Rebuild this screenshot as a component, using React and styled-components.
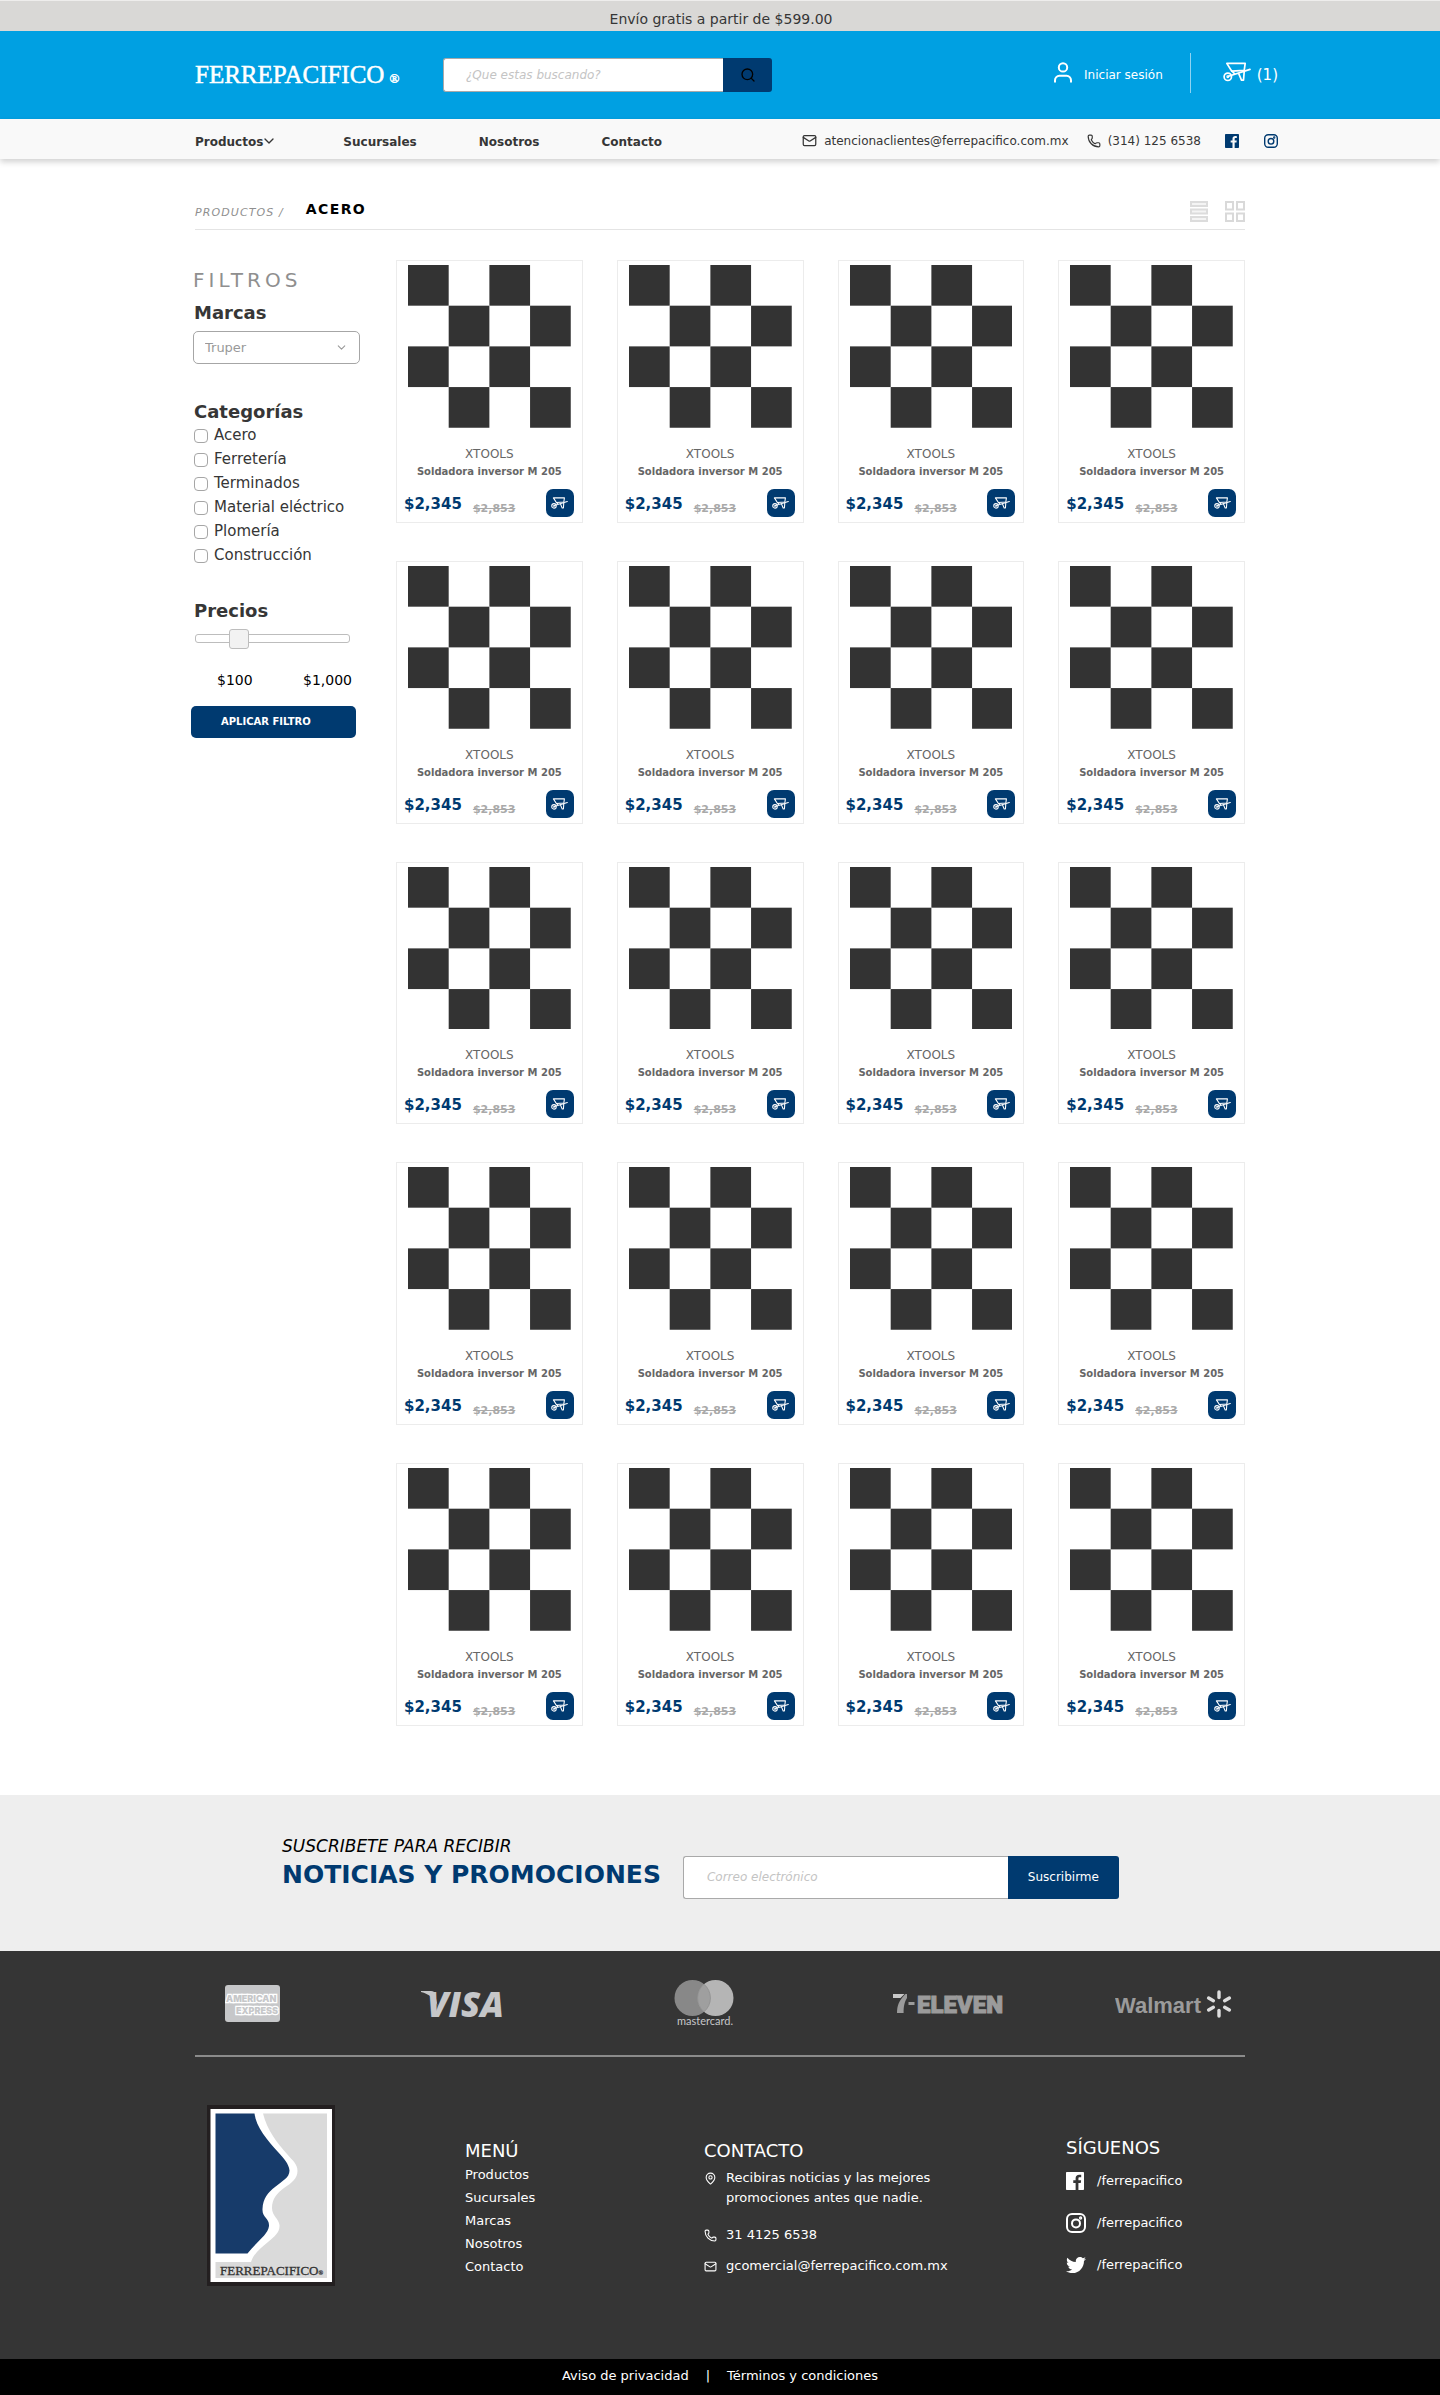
import React, { useState } from 'react';
import styled, { createGlobalStyle, ThemeProvider } from 'styled-components';
import { ChevronDown, Mail, MapPin, Phone, Search } from 'lucide-react';
import { FaTwitter } from 'react-icons/fa';

const theme = {
  navy: '#003a70',
  sky: '#00a0e2',
  ink: '#363636',
  dark: '#353535',
  mute: '#8f8f8f',
};

const GlobalStyle = createGlobalStyle`
  *, *::before, *::after { box-sizing: border-box; }
  body {
    margin: 0;
    background: #fff;
    color: ${theme.ink};
    font-family: "DejaVu Sans", Verdana, sans-serif;
    font-size: 12px;
  }
  h1, h2, h3, p, ul { margin: 0; padding: 0; font-weight: normal; }
  ul { list-style: none; }
  a { color: inherit; text-decoration: none; }
  button, input, select { font-family: inherit; margin: 0; }
  button { cursor: pointer; border: 0; padding: 0; }
  svg { display: block; flex: none; }
`;

const Container = styled.div`
  width: 100%;
  max-width: 1050px;
  margin: 0 auto;
`;

/* ---------- header ---------- */

const Promo = styled.p`
  padding: 7px 0 0 2px;
  border-top: 1px solid #eeedec;
  background: #d9d8d6;
  font-size: 14px;
  line-height: 23px;
  text-align: center;
`;

const WideRow = styled.div`
  display: flex;
  align-items: center;
  width: 100%;
  max-width: 1116px;
  margin: 0 auto;
  padding-left: 33px;
`;

const HeaderBar = styled.div`
  background: ${(p) => p.theme.sky};
  color: #fff;
`;

const HeaderRow = styled(WideRow)`
  min-height: 88px;
`;

const Brand = styled.a`
  display: flex;
  align-items: baseline;
  gap: 5px;
  width: 248px;
  font-family: "Liberation Serif", serif;
  font-size: 25px;
  line-height: 30px;
  -webkit-text-stroke: 0.5px currentColor;
`;

const Registered = styled.span`
  font-size: 13px;
  line-height: 13px;
`;

const FieldGroup = styled.form`
  display: flex;
  width: ${(p) => p.$width}px;
  height: ${(p) => p.$height}px;
`;

const TextField = styled.input`
  flex: 1;
  min-width: 0;
  padding: 0 ${(p) => p.$pad}px;
  border: 1px solid #a9a9a9;
  border-right: 0;
  border-radius: 3px 0 0 3px;
  background: #fff;
  color: ${theme.ink};
  font-size: 12px;
  &::placeholder { color: #c4c4c4; font-style: italic; opacity: 1; }
`;

const FieldButton = styled.button`
  display: grid;
  place-items: center;
  width: ${(p) => p.$width}px;
  border-radius: 0 3px 3px 0;
  background: ${(p) => p.theme.navy};
  color: ${(p) => p.$color};
  font-size: 12px;
`;

const Account = styled.div`
  display: flex;
  align-items: center;
  margin-left: auto;
`;

const AccountLink = styled.a`
  display: flex;
  align-items: center;
  gap: ${(p) => p.$gap}px;
  font-size: ${(p) => p.$size}px;
  svg { margin-bottom: 6px; }
`;

const Divider = styled.span`
  width: 1px;
  height: 40px;
  margin: 0 32px 4px 27px;
  background: #8fd3f2;
`;

const NavBar = styled.nav`
  position: relative;
  background: #f9f9f9;
  box-shadow: 0 3px 6px rgba(0, 0, 0, 0.18);
`;

const NavRow = styled(WideRow)`
  min-height: 40px;
  justify-content: space-between;
`;

const NavLinks = styled.ul`
  display: flex;
  gap: 62px;
  padding-top: 5px;
  font-weight: bold;
`;

const NavLink = styled.a`
  display: flex;
  align-items: center;
  svg { margin: -2px 4px 0 -2px; }
`;

const ContactStrip = styled.div`
  display: flex;
  align-items: center;
  gap: 18px;
  padding-top: 3px;
`;

const ContactLink = styled.a`
  display: flex;
  align-items: center;
  gap: 7px;
`;

const SocialLinks = styled.div`
  display: flex;
  gap: 25px;
  padding-left: 6px;
  color: ${(p) => p.theme.navy};
`;

/* ---------- catalogue ---------- */

const CrumbBar = styled.div`
  display: flex;
  align-items: flex-end;
  height: 71px;
  border-bottom: 1px solid #e4e4e4;
`;

const CrumbLink = styled.a`
  padding-bottom: 9px;
  color: ${(p) => p.theme.mute};
  font-size: 11px;
  font-style: italic;
  line-height: 14px;
  letter-spacing: 0.1em;
`;

const CrumbCurrent = styled.h1`
  padding: 0 0 12px 22px;
  color: #000;
  font-size: 14px;
  font-weight: bold;
  line-height: 16px;
  letter-spacing: 0.1em;
`;

const ViewSwitch = styled.div`
  display: flex;
  gap: 17px;
  margin-left: auto;
  padding-bottom: 7px;
`;

const ViewButton = styled.button`
  background: none;
`;

const Catalogue = styled.div`
  display: grid;
  grid-template-columns: 201px minmax(0, 1fr);
  padding: 30px 0 69px;
`;

const Sidebar = styled.form`
  width: 169px;
  margin: 8px 0 0 -4px;
`;

const FilterTitle = styled.h2`
  padding-left: 2px;
  color: ${(p) => p.theme.mute};
  font-size: 20px;
  line-height: 24px;
  letter-spacing: 0.2em;
`;

const FilterGroup = styled.fieldset`
  min-width: 0;
  margin: 0 0 0 2px;
  padding: ${(p) => p.$space}px 0 0;
  border: 0;
`;

const FilterHeading = styled.label`
  display: block;
  padding-left: 1px;
  font-size: 18px;
  font-weight: bold;
  line-height: 22px;
`;

const SelectBox = styled.div`
  display: grid;
  align-items: center;
  margin-top: 7px;
  color: #999;
  > * { grid-area: 1 / 1; }
  svg { justify-self: end; margin-right: 12px; pointer-events: none; }
`;

const BrandSelect = styled.select`
  width: 100%;
  height: 33px;
  padding: 0 11px;
  border: 1px solid #a6a6a6;
  border-radius: 5px;
  background: #fff;
  color: inherit;
  font-size: 13px;
  appearance: none;
`;

const CheckRow = styled.label`
  display: flex;
  align-items: center;
  gap: 6px;
  padding-left: 1px;
  font-size: 15px;
  line-height: 24px;
`;

const CheckBox = styled.input`
  appearance: none;
  width: 14px;
  height: 14px;
  margin-top: 2px;
  border: 1px solid #a6a6a6;
  border-radius: 4px;
  background: #fff;
  &:checked { background: ${(p) => p.theme.navy}; }
`;

const PriceSlider = styled.input`
  appearance: none;
  display: block;
  width: 155px;
  height: 20px;
  margin: 6px 0 0 2px;
  background: none;
  &::-webkit-slider-runnable-track {
    height: 9px;
    border: 1px solid #bdbdbd;
    border-radius: 3px;
    background: #fff;
  }
  &::-webkit-slider-thumb {
    appearance: none;
    width: 20px;
    height: 20px;
    margin-top: -6px;
    border: 1px solid #bdbdbd;
    border-radius: 3px;
    background: #f2f2f2;
  }
`;

const PriceRange = styled.div`
  display: flex;
  justify-content: space-between;
  padding: 23px 8px 17px 24px;
  color: #000;
  font-size: 14px;
  line-height: 18px;
`;

const ApplyButton = styled.button`
  width: 165px;
  height: 32px;
  padding: 0 0 1px 30px;
  border-radius: 5px;
  background: ${(p) => p.theme.navy};
  color: #fff;
  font-size: 10px;
  font-weight: bold;
  text-align: left;
`;

const ProductGrid = styled.ul`
  display: grid;
  grid-template-columns: repeat(4, minmax(0, 1fr));
  gap: 38px 34px;
`;

const Card = styled.li`
  padding: 4px 0 5px;
  border: 1px solid #ececec;
  text-align: center;
`;

const Picture = styled.svg`
  width: calc(100% - 22px);
  margin: 0 auto 18px;
`;

const Maker = styled.p`
  color: #666;
  font-size: 12px;
  line-height: 16px;
`;

const ProductName = styled.h3`
  margin: 3px 0 10px;
  color: #666;
  font-size: 10px;
  font-weight: bold;
  line-height: 14px;
`;

const BuyRow = styled.div`
  display: flex;
  align-items: flex-end;
  padding: 0 8px 0 7px;
`;

const Price = styled.strong`
  padding-bottom: 3px;
  color: ${(p) => p.theme.navy};
  font-size: 15px;
  line-height: 20px;
`;

const OldPrice = styled.s`
  padding: 0 0 1px 11px;
  color: #a9a9a9;
  font-size: 11px;
  font-weight: bold;
  line-height: 14px;
`;

const AddButton = styled.button`
  display: grid;
  place-items: center;
  width: 28px;
  height: 28px;
  margin-left: auto;
  border-radius: 7px;
  background: ${(p) => p.theme.navy};
  color: #fff;
`;

/* ---------- newsletter ---------- */

const Newsletter = styled.section`
  background: #eee;
`;

const NewsletterRow = styled(Container)`
  display: flex;
  align-items: flex-end;
  gap: 22px;
  height: 156px;
  padding: 0 0 52px 87px;
`;

const NewsletterText = styled.div`
  padding-bottom: 9px;
`;

const NewsletterLead = styled.p`
  color: #000;
  font-size: 17px;
  font-style: italic;
  line-height: 22px;
`;

const NewsletterTitle = styled.h2`
  padding-top: 3px;
  color: ${(p) => p.theme.navy};
  font-size: 25px;
  font-weight: bold;
  line-height: 30px;
  white-space: nowrap;
`;

/* ---------- footer ---------- */

const Footer = styled.footer`
  background: ${(p) => p.theme.dark};
  color: #fff;
`;

const Payments = styled(Container)`
  display: grid;
  grid-template-columns: 196fr 253fr 219fr 222fr 130fr;
  align-items: center;
  height: 106px;
  padding: 2px 0 0 30px;
  border-bottom: 2px solid #8b8b8b;
`;

const FooterGrid = styled(Container)`
  display: grid;
  grid-template-columns: 270fr 239fr 362fr 179fr;
  align-items: start;
  padding: 48px 0 62px;
  font-size: 13px;
`;

const LogoCell = styled.a`
  padding-left: 12px;
`;

const FooterColumn = styled.div`
  padding-top: ${(p) => p.$top}px;
`;

const FooterHeading = styled.h3`
  padding-bottom: ${(p) => p.$space}px;
  font-size: 18px;
  line-height: 22px;
`;

const MenuItem = styled.li`
  line-height: 23px;
`;

const ContactItem = styled.li`
  display: grid;
  grid-template-columns: 22px 1fr;
  padding-bottom: ${(p) => p.$space}px;
  line-height: 20px;
  svg { margin-top: 4px; }
`;

const SocialItem = styled.li`
  display: grid;
  grid-template-columns: 31px 1fr;
  align-items: center;
  padding-bottom: 22px;
  line-height: 20px;
`;

const LegalBar = styled.div`
  display: flex;
  justify-content: center;
  gap: 17px;
  padding-bottom: 3px;
  background: #000;
  font-size: 13px;
  line-height: 33px;
`;

/* ---------- drawings ---------- */

const Wheelbarrow = ({ width, stroke }) => (
  <svg width={width} height={Math.round((width * 20) / 28)} viewBox="0 0 28 20" fill="none" stroke="currentColor" strokeWidth={stroke} strokeLinejoin="round" strokeLinecap="round" aria-hidden="true">
    <path d="M3.8 1.4h18.4l-1 7-12.4.8z" />
    <circle cx="4.8" cy="14.8" r="3.7" />
    <circle cx="4.8" cy="14.8" r=".6" />
    <path d="M5.5 14.2 27 7.4M9 9.2l2.4 2.4M15.6 11.4l2.9 6.8h2l.7-8.6" />
  </svg>
);

const UserGlyph = () => (
  <svg width="18" height="21" viewBox="0 0 18 21" fill="none" stroke="currentColor" strokeWidth="2" aria-hidden="true">
    <circle cx="9" cy="5.4" r="4.2" />
    <path d="M1 20.6v-2.4a4.4 4.4 0 0 1 4.4-4.4h7.2a4.4 4.4 0 0 1 4.4 4.4v2.4" />
  </svg>
);

const FacebookGlyph = ({ size }) => (
  <svg width={size} height={size} viewBox="0 0 24 24" fill="currentColor" aria-hidden="true">
    <path d="M22.676 0H1.324C.593 0 0 .593 0 1.324v21.352C0 23.408.593 24 1.324 24h11.494v-9.294H9.689v-3.621h3.129V8.41c0-3.099 1.894-4.785 4.659-4.785 1.325 0 2.464.097 2.796.141v3.24h-1.921c-1.5 0-1.792.721-1.792 1.771v2.311h3.584l-.465 3.63H16.56V24h6.115c.733 0 1.325-.592 1.325-1.324V1.324C24 .593 23.408 0 22.676 0" />
  </svg>
);

const InstagramGlyph = ({ size }) => (
  <svg width={size} height={size} viewBox="0 0 20 20" fill="none" stroke="currentColor" strokeWidth="2" aria-hidden="true">
    <rect x="1" y="1" width="18" height="18" rx="5" />
    <circle cx="10" cy="10.4" r="4" />
    <circle cx="14.6" cy="5" r=".7" />
  </svg>
);

const ListGlyph = () => (
  <svg width="18" height="21" viewBox="0 0 18 21" fill="#f4f4f4" stroke="#dcdcdc" strokeWidth="2" aria-hidden="true">
    <rect x="1" y="1" width="16" height="4" />
    <rect x="1" y="8.5" width="16" height="4" />
    <rect x="1" y="16" width="16" height="4" />
  </svg>
);

const GridGlyph = () => (
  <svg width="20" height="21" viewBox="0 0 20 21" fill="none" stroke="#d9d9d9" strokeWidth="2" aria-hidden="true">
    <rect x="1" y="1" width="7" height="7.5" />
    <rect x="12" y="1" width="7" height="7.5" />
    <rect x="1" y="12.5" width="7" height="7.5" />
    <rect x="12" y="12.5" width="7" height="7.5" />
  </svg>
);

const ProductPicture = () => (
  <Picture viewBox="0 0 4 4" fill="#333" role="img" aria-label="Soldadora inversor">
    {[0, 1, 2, 3].flatMap((row) =>
      [0, 2].map((col) => <rect key={`${row}${col}`} x={col + (row % 2)} y={row} width="1" height="1" />)
    )}
  </Picture>
);

const AmexMark = () => (
  <svg width="55" height="37" viewBox="0 0 55 37" role="img" aria-label="American Express">
    <rect width="55" height="37" rx="3" fill="#c6c7c9" />
    <g fontFamily="Inter, sans-serif" fontSize="9" fontWeight="900" fill="#c6c7c9" stroke="#fff" strokeWidth="2.4" paintOrder="stroke">
      <text x="1" y="17">AMERICAN</text>
      <text x="11" y="29">EXPRESS</text>
    </g>
  </svg>
);

const VisaMark = () => (
  <svg width="92" height="36" viewBox="0 -4 92 36" fill="#c6c7c9" role="img" aria-label="Visa">
    <path d="M0 1h10c2.4 0 3.6.8 4 3l2.5 12C13.5 8.5 8 3.8 0 2z" />
    <text x="6" y="27" fontFamily='"Open Sans", sans-serif' fontSize="35" fontWeight="800" fontStyle="italic">VISA</text>
  </svg>
);

const MastercardMark = () => (
  <svg width="60" height="47" viewBox="0 0 60 47" role="img" aria-label="mastercard">
    <circle cx="18.5" cy="18" r="18" fill="#888" />
    <circle cx="41.5" cy="18" r="18" fill="#b5b5b5" />
    <path d="M30 4.2a18 18 0 0 1 0 27.6a18 18 0 0 1 0-27.6z" fill="#9f9f9f" stroke="#868686" strokeWidth=".6" />
    <text x="3" y="45" fontFamily="Lato, sans-serif" fontSize="11" fill="#c6c7c9">mastercard.</text>
  </svg>
);

const SevenElevenMark = () => (
  <svg width="120" height="30" viewBox="0 -4 120 30" fill="#9b9b9b" role="img" aria-label="7-Eleven">
    <path d="M0 1h11.5L7.500 5H0z" fill="#c9c9c9" />
    <path d="M12.5 1H14v4c-2.5 4-3.4 8-3.4 15H4c0-7 1.5-12 8.5-19zM15.5 9h6v3h-6z" />
    <text x="24" y="20" fontFamily='"Liberation Sans Narrow", Roboto, sans-serif' fontSize="24" fontWeight="900" stroke="#9b9b9b" strokeWidth="1">ELEVEN</text>
  </svg>
);

const WalmartMark = () => (
  <svg width="118" height="30" viewBox="0 0 118 30" role="img" aria-label="Walmart">
    <text x="0" y="24" fontFamily='"Liberation Sans", Arial, sans-serif' fontSize="22" fontWeight="700" fill="#9b9b9b">Walmart</text>
    <g stroke="#dedede" strokeWidth="3.4" strokeLinecap="round">
      {[0, 60, 120, 180, 240, 300].map((turn) => (
        <path key={turn} d="M104 8.5V3" transform={`rotate(${turn} 104 15)`} />
      ))}
    </g>
  </svg>
);

const CompanyMark = () => (
  <svg width="128" height="181" viewBox="0 0 128 181" role="img" aria-label="Ferrepacifico">
    <path fill="#231f20" d="M0 0h128v181H0z" />
    <path fill="#fff" d="M3.5 4h121.5v173H3.5z" />
    <path fill="#dadada" d="M56 8.5h64V173H8.500v-16H44c3-9 10-14 17-20s12-10 11.5-17c-.5-6-7.5-9-7.5-17 0-9 5-15 12-20 8-5 13.5-10 13.5-17S86 56 80 49C71 39 60 25 56 8.500z" />
    <path fill="#173b6a" d="M8.500 8.500h39C49 22 61 36 71 47c5.5 6 11 12 11.5 18.5C82.500 73 75 76 68 82c-7 5.5-12 11-12.5 22-.5 9 7 9 6.500 17-1 9-12 15-21.500 27.500h-32z" />
    <text x="13" y="170" fontFamily='"Liberation Serif", serif' fontSize="13" fill="#333" stroke="#333" strokeWidth=".3">FERREPACIFICO<tspan fontSize="6">®</tspan></text>
  </svg>
);

/* ---------- page ---------- */

const categories = ['Acero', 'Ferretería', 'Terminados', 'Material eléctrico', 'Plomería', 'Construcción'];
const products = Array.from({ length: 20 }, (_, id) => ({
  id,
  maker: 'XTOOLS',
  name: 'Soldadora inversor M 205',
  price: '$2,345',
  oldPrice: '$2,853',
}));
const menu = ['Productos', 'Sucursales', 'Marcas', 'Nosotros', 'Contacto'];

function SiteHeader() {
  return (
    <header>
      <Promo>Envío gratis a partir de $599.00</Promo>
      <HeaderBar>
        <HeaderRow>
          <Brand href="#">FERREPACIFICO <Registered>®</Registered></Brand>
          <FieldGroup $width={329} $height={34} role="search">
            <TextField $pad={22} type="search" aria-label="Buscar" placeholder="¿Que estas buscando?" />
            <FieldButton $width={49} $color="#000" type="button" aria-label="Buscar">
              <Search size={16} />
            </FieldButton>
          </FieldGroup>
          <Account>
            <AccountLink href="#" $gap={12} $size={12}><UserGlyph />Iniciar sesión</AccountLink>
            <Divider />
            <AccountLink href="#" $gap={6} $size={15}><Wheelbarrow width={28} stroke={1.7} />(1)</AccountLink>
          </Account>
        </HeaderRow>
      </HeaderBar>
      <NavBar>
        <NavRow>
          <NavLinks>
            <li><NavLink href="#">Productos<ChevronDown size={16} /></NavLink></li>
            <li><NavLink href="#">Sucursales</NavLink></li>
            <li><NavLink href="#">Nosotros</NavLink></li>
            <li><NavLink href="#">Contacto</NavLink></li>
          </NavLinks>
          <ContactStrip>
            <ContactLink href="#"><Mail size={15} />atencionaclientes@ferrepacifico.com.mx</ContactLink>
            <ContactLink href="#"><Phone size={14} />(314) 125 6538</ContactLink>
            <SocialLinks>
              <a href="#" aria-label="Facebook"><FacebookGlyph size={14} /></a>
              <a href="#" aria-label="Instagram"><InstagramGlyph size={14} /></a>
            </SocialLinks>
          </ContactStrip>
        </NavRow>
      </NavBar>
    </header>
  );
}

function Filters() {
  const [price, setPrice] = useState(250);
  return (
    <Sidebar>
      <FilterTitle>FILTROS</FilterTitle>
      <FilterGroup $space={10}>
        <FilterHeading htmlFor="brand">Marcas</FilterHeading>
        <SelectBox>
          <BrandSelect id="brand"><option>Truper</option></BrandSelect>
          <ChevronDown size={13} />
        </SelectBox>
      </FilterGroup>
      <FilterGroup $space={37}>
        <FilterHeading as="h3">Categorías</FilterHeading>
        {categories.map((name) => (
          <CheckRow key={name}><CheckBox type="checkbox" />{name}</CheckRow>
        ))}
      </FilterGroup>
      <FilterGroup $space={33}>
        <FilterHeading htmlFor="price">Precios</FilterHeading>
        <PriceSlider id="price" type="range" min="0" max="1000" value={price} onChange={(e) => setPrice(e.target.value)} />
        <PriceRange><span>$100</span><span>$1,000</span></PriceRange>
      </FilterGroup>
      <ApplyButton type="button">APLICAR FILTRO</ApplyButton>
    </Sidebar>
  );
}

function ProductCard({ maker, name, price, oldPrice }) {
  return (
    <Card>
      <ProductPicture />
      <Maker>{maker}</Maker>
      <ProductName>{name}</ProductName>
      <BuyRow>
        <Price>{price}</Price>
        <OldPrice>{oldPrice}</OldPrice>
        <AddButton aria-label="Agregar al carrito"><Wheelbarrow width={17} stroke={1.8} /></AddButton>
      </BuyRow>
    </Card>
  );
}

function SiteFooter() {
  return (
    <Footer>
      <Payments>
        <AmexMark />
        <VisaMark />
        <MastercardMark />
        <SevenElevenMark />
        <WalmartMark />
      </Payments>
      <FooterGrid>
        <LogoCell href="#"><CompanyMark /></LogoCell>
        <FooterColumn $top={35}>
          <FooterHeading $space={1}>MENÚ</FooterHeading>
          <ul>{menu.map((item) => <MenuItem key={item}><a href="#">{item}</a></MenuItem>)}</ul>
        </FooterColumn>
        <FooterColumn $top={35}>
          <FooterHeading $space={6}>CONTACTO</FooterHeading>
          <ul>
            <ContactItem $space={17}><MapPin size={13} /><span>Recibiras noticias y las mejores<br />promociones antes que nadie.</span></ContactItem>
            <ContactItem $space={11}><Phone size={13} /><span>31 4125 6538</span></ContactItem>
            <ContactItem $space={0}><Mail size={13} /><a href="#">gcomercial@ferrepacifico.com.mx</a></ContactItem>
          </ul>
        </FooterColumn>
        <FooterColumn $top={32}>
          <FooterHeading $space={12}>SÍGUENOS</FooterHeading>
          <ul>
            <SocialItem><FacebookGlyph size={18} /><a href="#">/ferrepacifico</a></SocialItem>
            <SocialItem><InstagramGlyph size={20} /><a href="#">/ferrepacifico</a></SocialItem>
            <SocialItem><FaTwitter size={20} /><a href="#">/ferrepacifico</a></SocialItem>
          </ul>
        </FooterColumn>
      </FooterGrid>
      <LegalBar>
        <a href="#">Aviso de privacidad</a>
        <span>|</span>
        <a href="#">Términos y condiciones</a>
      </LegalBar>
    </Footer>
  );
}

export default function App() {
  return (
    <ThemeProvider theme={theme}>
      <GlobalStyle />
      <SiteHeader />
      <Container as="main">
        <CrumbBar>
          <CrumbLink href="#">PRODUCTOS /</CrumbLink>
          <CrumbCurrent>ACERO</CrumbCurrent>
          <ViewSwitch>
            <ViewButton type="button" aria-label="Lista"><ListGlyph /></ViewButton>
            <ViewButton type="button" aria-label="Cuadrícula"><GridGlyph /></ViewButton>
          </ViewSwitch>
        </CrumbBar>
        <Catalogue>
          <Filters />
          <ProductGrid>
            {products.map((product) => <ProductCard key={product.id} {...product} />)}
          </ProductGrid>
        </Catalogue>
      </Container>
      <Newsletter>
        <NewsletterRow>
          <NewsletterText>
            <NewsletterLead>SUSCRIBETE PARA RECIBIR</NewsletterLead>
            <NewsletterTitle>NOTICIAS Y PROMOCIONES</NewsletterTitle>
          </NewsletterText>
          <FieldGroup $width={436} $height={43}>
            <TextField $pad={23} type="email" aria-label="Correo electrónico" placeholder="Correo electrónico" />
            <FieldButton $width={111} $color="#fff" type="button">Suscribirme</FieldButton>
          </FieldGroup>
        </NewsletterRow>
      </Newsletter>
      <SiteFooter />
    </ThemeProvider>
  );
}
